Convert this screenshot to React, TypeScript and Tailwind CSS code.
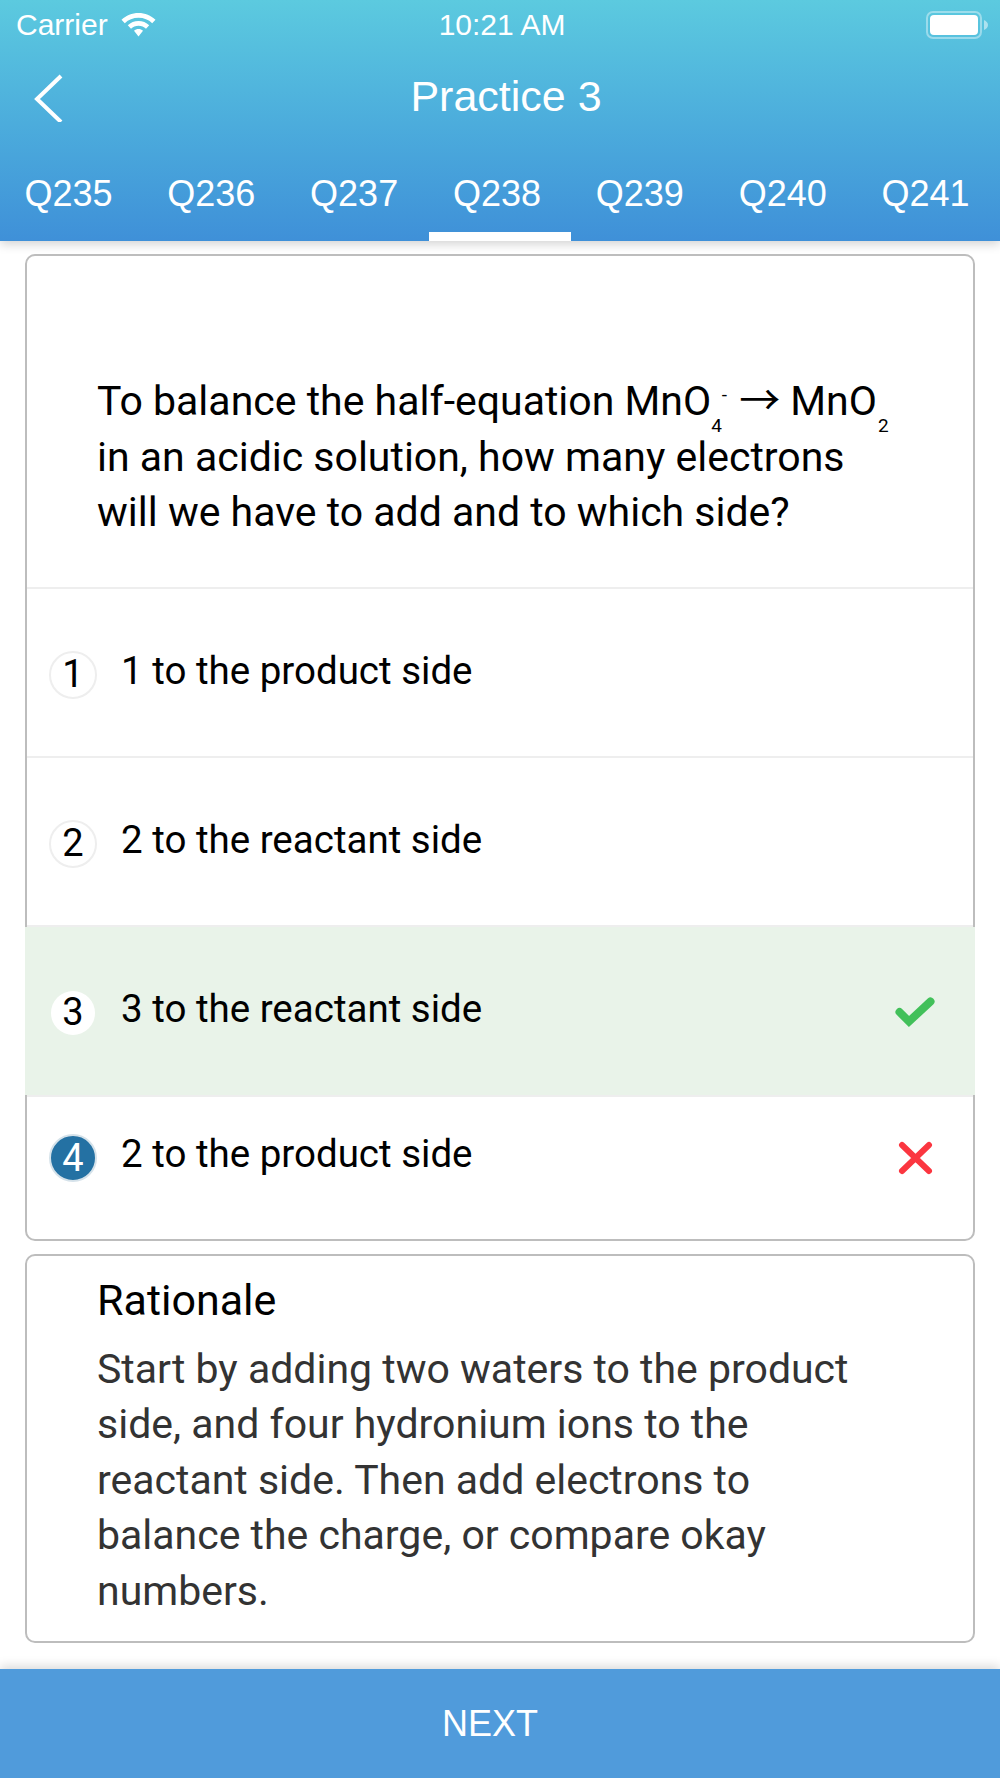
const TABS = ['Q235', 'Q236', 'Q237', 'Q238', 'Q239', 'Q240', 'Q241']

const OPTIONS = [
  { n: '1', text: '1 to the product side' },
  { n: '2', text: '2 to the reactant side' },
  { n: '3', text: '3 to the reactant side', correct: true },
  { n: '4', text: '2 to the product side', wrong: true },
]

function StatusBar() {
  return (
    <div className="flex h-[49px] items-center justify-between pl-[16px] pr-[12px] text-[30px] text-white">
      <div className="flex flex-1 items-center gap-[13px]">
        <span>Carrier</span>
        <svg width="35" height="24" viewBox="0 0 35 24" fill="white">
          <path d="M17.5 0C11 0 5 2.400 0.500 6.800L3.800 10.300C7.400 6.700 12.200 4.800 17.500 4.800C22.800 4.800 27.600 6.700 31.200 10.300L34.500 6.800C30 2.400 24 0 17.500 0Z" />
          <path d="M17.500 8C13.400 8 9.700 9.500 6.800 12.300L10 15.700C12 13.800 14.600 12.700 17.500 12.700C20.400 12.700 23 13.800 25 15.700L28.200 12.300C25.300 9.500 21.600 8 17.500 8Z" />
          <path d="M17.500 16C15.800 16 14.200 16.600 13 17.800L17.500 23.500L22 17.800C20.800 16.600 19.200 16 17.500 16Z" />
        </svg>
      </div>
      <span>10:21 AM</span>
      <div className="flex flex-1 items-center justify-end gap-[2px]">
        <div className="h-[28px] w-[56px] rounded-[7px] border-[2px] border-white/40 p-[2px]">
          <div className="h-full w-full rounded-[4px] bg-white" />
        </div>
        <svg width="4" height="10" viewBox="0 0 4 10" fill="white" fillOpacity="0.5">
          <path d="M0 0C2.500 1 4 3 4 5C4 7 2.500 9 0 10Z" />
        </svg>
      </div>
    </div>
  )
}

function Header() {
  return (
    <header className="relative z-10 h-[241px] bg-gradient-to-b from-[#5ccadf] to-[#3f90d8] shadow-[0_3px_10px_rgba(0,0,0,0.18)]">
      <StatusBar />
      <div className="relative flex h-[94px] items-center justify-center pl-[12px] text-[43px] text-white">
        <svg className="absolute left-[32px] top-[25px]" width="32" height="48" viewBox="0 0 32 48" fill="none" stroke="white" strokeWidth="4">
          <path d="M29 2L5 25L29 48" />
        </svg>
        Practice 3
      </div>
      <div className="grid h-[98px] grid-cols-7">
        {TABS.map((t) => (
          <div key={t} className="flex flex-col items-center justify-end">
            <span className="mb-[18px] mr-[6px] text-[36px] leading-[40px] text-white">{t}</span>
            <div className={t === 'Q238' ? 'h-[9px] w-full bg-white' : 'h-[9px] w-full'} />
          </div>
        ))}
      </div>
    </header>
  )
}

function OptionRow({ n, text, correct, wrong }: { n: string; text: string; correct?: boolean; wrong?: boolean }) {
  let rowClass = 'h-[169px] pt-[4px] pl-[22px] pr-[40px] border-b-[2px] border-[#eeeeee]'
  if (correct) rowClass = 'h-[168px] pt-[3px] -mx-[2px] pl-[24px] pr-[40px] bg-[#e9f3e9]'
  if (wrong) rowClass = 'h-[145px] pb-[21px] pl-[22px] pr-[40px] border-t-[2px] border-[#eeeeee]'

  let circleClass = 'border-[2px] border-[#eeeeee] bg-white text-black'
  if (correct) circleClass = 'border-[2px] border-transparent bg-white bg-clip-padding text-black'
  if (wrong) circleClass = 'border-[2px] border-[#d5e2ea] bg-[#2471a3] text-white'

  return (
    <div className={`flex items-center ${rowClass}`}>
      <div className={`flex h-[48px] w-[48px] shrink-0 items-center justify-center rounded-full text-[38px] ${circleClass}`}>{n}</div>
      <span className="-mt-[8px] ml-[24px] flex-1 text-[38.500px] text-black">{text}</span>
      {correct && (
        <svg width="40" height="31" viewBox="0 0 40 31" fill="none" stroke="#42c05a" strokeWidth="8" strokeLinecap="round">
          <path d="M4.500 15L14 24.500L35.500 4.500" />
        </svg>
      )}
      {wrong && (
        <svg width="35" height="34" viewBox="0 0 35 34" fill="none" stroke="#fb3640" strokeWidth="6" strokeLinecap="round">
          <path d="M4 4L31 30M31 4L4 30" />
        </svg>
      )}
    </div>
  )
}

export default function App() {
  return (
    <div className="flex h-[1778px] flex-col overflow-hidden bg-white font-['Liberation_Sans',Arial,sans-serif]">
      <Header />
      <main className="flex flex-1 flex-col gap-[13px] px-[25px] pt-[13px] font-['Roboto',sans-serif]">
        <section className="h-[987px] rounded-[10px] border-[2px] border-[#bdbdbd]">
          <div className="h-[333px] border-b-[2px] border-[#eeeeee] pl-[70px] pr-[60px] pt-[118px] text-[41px] leading-[55.500px] text-black">
            To balance the half-equation MnO
            <span className="relative top-[17px] text-[19px] leading-none">4</span>
            <span className="relative -top-[14px] text-[19px] leading-none">-</span>
            <span className="ml-[12px] font-['Noto_Sans_CJK_JP',sans-serif] leading-none">→</span> MnO
            <span className="relative top-[17px] ml-[1px] text-[19px] leading-none">2</span>
            <br />
            in an acidic solution, how many electrons
            <br />
            will we have to add and to which side?
          </div>
          {OPTIONS.map((o) => (
            <OptionRow key={o.n} {...o} />
          ))}
        </section>
        <section className="h-[389px] rounded-[10px] border-[2px] border-[#bdbdbd] pl-[70px] pr-[100px] pt-[17px]">
          <h2 className="text-[43px] leading-[55.500px] text-black">Rationale</h2>
          <p className="mt-[13px] text-[41px] leading-[55.500px] text-[#333333]">
            Start by adding two waters to the product side, and four hydronium ions to the reactant side. Then add electrons to balance the charge, or compare okay numbers.
          </p>
        </section>
      </main>
      <footer className="flex h-[109px] items-center justify-center bg-[#509bdb] pr-[20px] text-[36px] text-white shadow-[0_-3px_10px_rgba(0,0,0,0.15)]">NEXT</footer>
    </div>
  )
}
